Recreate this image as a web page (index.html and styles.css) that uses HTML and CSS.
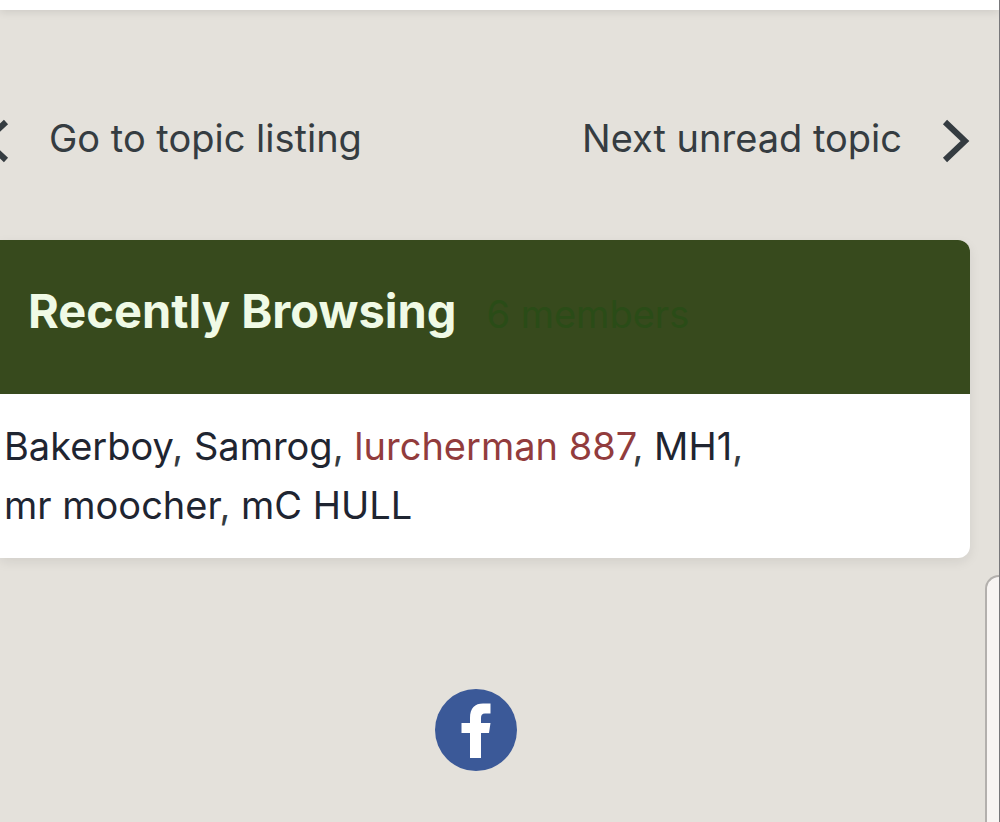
FILE: index.html
```html
<!DOCTYPE html>
<html lang="en">
<head>
  <meta charset="UTF-8">
  <meta name="viewport" content="width=device-width, initial-scale=1.0">
  <title>Recently Browsing</title>
  <link rel="stylesheet" href="styles.css">
</head>
<body>

  <header class="top-bar"></header>

  <main class="content">
    <nav class="pager">
      <a href="#" class="pager-link">
        <svg class="chevron" viewBox="0 0 28 44" aria-hidden="true"><path d="M25 3 L5 22 L25 41"/></svg>
        <span>Go to topic listing</span>
      </a>
      <a href="#" class="pager-link">
        <span>Next unread topic</span>
        <svg class="chevron" viewBox="0 0 28 44" aria-hidden="true"><path d="M3 3 L23 22 L3 41"/></svg>
      </a>
    </nav>

    <section class="card">
      <div class="card-header">
        <h2>Recently Browsing</h2>
        <span class="count">6 members</span>
      </div>
      <ul class="members">
        <li><a href="#">Bakerboy</a>, </li>
        <li><a href="#">Samrog</a>, </li>
        <li><a href="#" class="staff">lurcherman 887</a>, </li>
        <li><a href="#">MH1</a>, </li>
        <li><a href="#">mr moocher</a>, </li>
        <li><a href="#">mC HULL</a></li>
      </ul>
    </section>
  </main>

  <footer class="social">
    <a href="#" class="facebook" aria-label="Facebook">
      <svg viewBox="0 0 82 82" aria-hidden="true">
        <circle cx="41" cy="41" r="41" fill="#3b5998"/>
        <path fill="#fff" d="M35 69 V44 H26.500 V34 H35 V29 C35 19 40 14.500 48 14.500 H55.500 V24.500 H50 C47 24.500 46 26 46 29 V34 H55.500 L54 44 H46 V69 Z"/>
      </svg>
    </a>
  </footer>

  <!-- Side drawer -->
  <aside class="drawer"></aside>

</body>
</html>
```

FILE: styles.css
```css
* {
  box-sizing: border-box;
}

body {
  font-family: Inter, "Liberation Sans", sans-serif;
  background-color: #e4e1db;
  color: #353c41;
  margin: 0;
  min-height: 100vh;
  border-right: 1px solid #77777a;
  overflow-x: hidden;
}

a {
  color: inherit;
  text-decoration: none;
}

.top-bar {
  height: 10px;
  background-color: #fff;
  box-shadow: 0 2px 8px rgba(0,0,0,0.1);
}

.content {
  padding-right: 29px;
}

.pager {
  display: flex;
  justify-content: space-between;
  align-items: center;
  margin-left: -19px;
  padding-top: 98px;
  font-size: 38px;
  line-height: 60px;
}

.pager-link {
  display: flex;
  align-items: center;
  gap: 40px;
}

.pager-link span {
  padding-bottom: 6px;
}

.chevron {
  width: 28px;
  height: 44px;
  fill: none;
  stroke: #353c41;
  stroke-width: 6px;
}

.card {
  margin-top: 66px;
  background-color: #fff;
  border-radius: 0 12px 12px 0;
  box-shadow: 0 4px 12px rgba(0,0,0,0.08);
  overflow: hidden;
}

.card-header {
  display: flex;
  align-items: baseline;
  gap: 30px;
  padding: 36px 28px 45px;
  background-color: #374a1d;
  line-height: 70px;
}

.card-header h2 {
  margin: 0;
  color: #f0fae6;
  font-size: 47px;
  font-weight: 700;
}

.count {
  color: #2a4c17;
  font-size: 38px;
}

.members {
  list-style: none;
  max-width: 800px;
  margin: 0;
  padding: 23px 4px;
  color: #353c41;
  font-size: 38px;
  line-height: 59px;
}

.members li {
  display: inline;
}

.members a {
  color: #1f2531;
  white-space: nowrap;
}

.members .staff {
  color: #923c3d;
}

.social {
  display: flex;
  justify-content: center;
  padding: 131px 48px 51px 0;
}

.facebook svg {
  display: block;
  width: 82px;
  height: 82px;
}

.drawer {
  position: fixed;
  right: 1px;
  top: 575px;
  bottom: 0;
  width: 14px;
  background-color: #f8f5f3;
  border: 2px solid #b3b0ad;
  border-width: 2px 0 0 2px;
  border-radius: 14px 0 0 0;
}
```
